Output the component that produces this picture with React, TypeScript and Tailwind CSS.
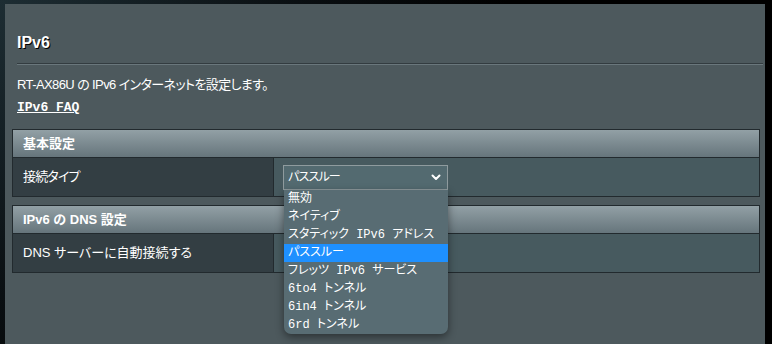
import React from "react";

const sans = "font-['Liberation_Sans','Noto_Sans_CJK_JP',sans-serif]";

const options = [
  "無効",
  "ネイティブ",
  "スタティック IPv6 アドレス",
  "パススルー",
  "フレッツ IPv6 サービス",
  "6to4 トンネル",
  "6in4 トンネル",
  "6rd トンネル",
];

function Chevron() {
  return (
    <svg width="10" height="7" viewBox="0 0 10 7" className="shrink-0">
      <path d="M1.5 1.5 L5 5 L8.5 1.5" fill="none" stroke="#fff" strokeWidth="2" strokeLinecap="round" strokeLinejoin="round" />
    </svg>
  );
}

function Header({ children }: { children: React.ReactNode }) {
  return (
    <div className="h-[28px] flex items-center pl-[10px] bg-[linear-gradient(#92a0a5,#66757c)] border-b border-[#222a2e] text-white font-bold text-[13px] [font-feature-settings:'palt']">
      {children}
    </div>
  );
}

export default function App() {
  return (
    <div className={`w-[772px] h-[344px] overflow-hidden bg-[radial-gradient(circle_at_0%_0%,#1d2d33_0%,#0a0f12_35%,#000_60%)] pt-[4px] pl-[5px] pr-[7px] ${sans}`}>
      <div className="h-full bg-[#4d595d] pt-[29px] flex flex-col">
        <div className="pl-[12px] h-[20px] leading-[20px] text-[16px] font-bold text-white [text-shadow:1px_1px_0_#000]">IPv6</div>
        <div className="mt-[10px] ml-[12px] mr-[2px] h-[2px] border-t border-[#333c40] border-b border-b-[#6a777c]" />
        <div className="mt-[10px] pl-[12px] h-[20px] leading-[20px] text-[13px] text-white tracking-[-0.6px] [font-feature-settings:'palt']">
          RT-AX86U の IPv6 インターネットを設定します。
        </div>
        <div className="mt-[3px] pl-[12px] h-[20px] leading-[20px] text-[13px] font-bold text-white font-['Liberation_Mono',monospace]">
          <span className="underline">IPv6 FAQ</span>
        </div>

        <div className="mt-[11px] ml-[7px] mr-[5px] border border-[#222a2e]">
          <Header>基本設定</Header>
          <div className="flex h-[38px]">
            <div className="w-[261px] bg-[#333e43] border-r border-[#222a2e] flex items-center pl-[10px] text-[13px] text-white tracking-[-0.8px] [font-feature-settings:'palt']">
              接続タイプ
            </div>
            <div className="flex-1 bg-[#475a5f] flex items-center pl-[9px]">
              <div className="relative">
                <div className="w-[165px] h-[25px] bg-[#536a70] border border-[#8f9b9e] flex items-center justify-between pl-[4px] pr-[6px] text-[12px] text-white tracking-[-0.8px] [font-feature-settings:'palt']">
                  <span>パススルー</span>
                  <Chevron />
                </div>
                <div className="absolute left-[1px] top-full w-[164px] z-10 bg-[#586c73] rounded-b-[7px] shadow-[0_3px_8px_rgba(0,0,0,0.45)] overflow-hidden">
                  {options.map((o, i) => (
                    <div
                      key={o}
                      className={`h-[18px] leading-[18px] pl-[4px] text-[12px] text-white whitespace-nowrap font-['Liberation_Mono','Noto_Sans_CJK_JP',monospace] [font-feature-settings:'palt'] ${i === 3 ? "bg-[#1e90ff]" : ""}`}
                    >
                      {o}
                    </div>
                  ))}
                </div>
              </div>
            </div>
          </div>
        </div>

        <div className="mt-[8px] ml-[7px] mr-[5px] border border-[#222a2e]">
          <Header>IPv6 の DNS 設定</Header>
          <div className="flex h-[38px]">
            <div className="w-[261px] bg-[#333e43] border-r border-[#222a2e] flex items-center pl-[10px] text-[13px] text-white [font-feature-settings:'palt']">
              DNS サーバーに自動接続する
            </div>
            <div className="flex-1 bg-[#475a5f]" />
          </div>
        </div>
      </div>
    </div>
  );
}
